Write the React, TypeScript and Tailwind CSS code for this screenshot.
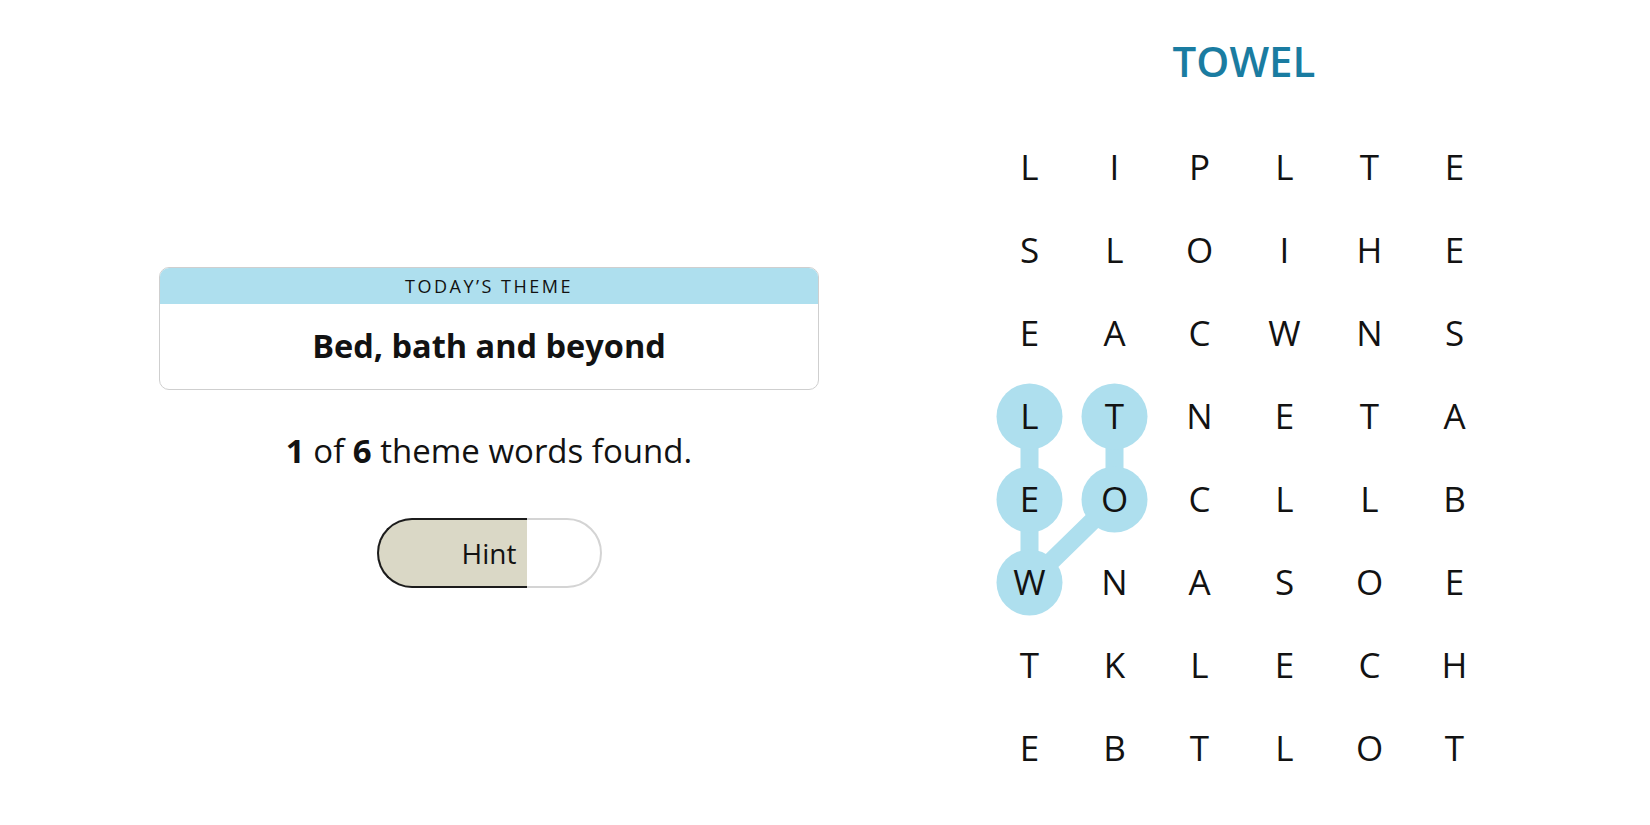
import type { ReactNode } from "react";

const GRID = [
  "LIPLTE",
  "SLOIHE",
  "EACWNS",
  "LTNETA",
  "EOCLLB",
  "WNASOE",
  "TKLECH",
  "EBTLOT",
];

const CELL_W = 85;
const CELL_H = 83;

// found word path (col, row)
const FOUND: [number, number][] = [
  [1, 3],
  [1, 4],
  [0, 5],
  [0, 4],
  [0, 3],
];

function center(c: number, r: number) {
  return { x: CELL_W / 2 + c * CELL_W, y: CELL_H / 2 + r * CELL_H };
}

function ThemeCard({ children }: { children: ReactNode }) {
  return (
    <div className="w-[660px] rounded-[10px] border border-[#cfcfcf] overflow-hidden">
      <div className="h-[36px] bg-[#aedfee] flex items-center justify-center">
        <span className="text-[18px] font-medium tracking-[2.5px] text-[#121212] leading-none">
          TODAY’S THEME
        </span>
      </div>
      <div className="h-[85px] flex items-center justify-center">
        <h1 className="text-[32.5px] font-bold text-[#121212] leading-none">{children}</h1>
      </div>
    </div>
  );
}

function HintButton() {
  return (
    <button className="relative w-[225px] h-[70px]">
      <span className="absolute inset-0 rounded-full border-2 border-[#d4d4d4] bg-white" />
      <span className="absolute left-0 top-0 bottom-0 w-[150px] rounded-l-full border-2 border-r-0 border-[#1c1c1c] bg-[#dad8c6]" />
      <span className="relative text-[28px] font-medium text-[#121212]">Hint</span>
    </button>
  );
}

function Board() {
  const pts = FOUND.map(([c, r]) => center(c, r));
  const w = CELL_W * 6;
  const h = CELL_H * 8;

  return (
    <div className="relative">
      <svg className="absolute inset-0" width={w} height={h}>
        <polyline
          points={pts.map((p) => `${p.x},${p.y}`).join(" ")}
          fill="none"
          stroke="#aedfee"
          strokeWidth={18}
          strokeLinejoin="round"
        />
        {pts.map((p, i) => (
          <circle key={i} cx={p.x} cy={p.y} r={33} fill="#aedfee" />
        ))}
      </svg>
      <div className="relative grid grid-cols-6">
        {GRID.map((row, r) =>
          row.split("").map((ch, c) => (
            <div
              key={`${r}-${c}`}
              className="w-[85px] h-[83px] flex items-center justify-center text-[35px] text-[#121212]"
            >
              {ch}
            </div>
          ))
        )}
      </div>
    </div>
  );
}

export default function App() {
  return (
    <div className="flex w-[1650px] h-[825px] bg-white font-['Open_Sans',sans-serif]">
      <div className="w-[978px] flex flex-col items-center pt-[267px]">
        <ThemeCard>Bed, bath and beyond</ThemeCard>
        <p className="mt-[39px] text-[33px] leading-[44px] text-[#121212]">
          <strong className="font-bold">1</strong> of <strong className="font-bold">6</strong> theme
          words found.
        </p>
        <div className="mt-[45px]">
          <HintButton />
        </div>
      </div>

      <div className="w-[532px] flex flex-col items-center pt-[33px]">
        <h2 className="text-[42px] leading-[56px] font-semibold text-[#1a7ca1]">TOWEL</h2>
        <div className="mt-[37px] mr-[4px]">
          <Board />
        </div>
      </div>
    </div>
  );
}
